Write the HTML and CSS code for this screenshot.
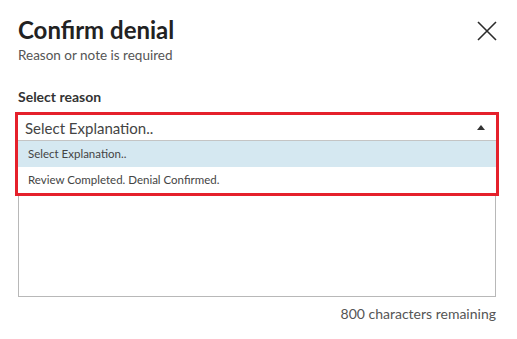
FILE: index.html
```html
<!DOCTYPE html>
<html lang="en">
  <head>
    <meta charset="UTF-8" />
    <title>Confirm denial</title>
    <link rel="stylesheet" href="styles.css">
  </head>
  <body>
    <div class="dialog">
      <div class="header">
        <div>
          <h1>Confirm denial</h1>
          <p class="subtitle">Reason or note is required</p>
        </div>
        <button class="close" type="button" aria-label="Close">
          <svg width="20" height="20" viewBox="0 0 20 20">
            <path d="M1 1 L19 19 M19 1 L1 19" stroke="#2b2b2b" stroke-width="1.6" fill="none" />
          </svg>
        </button>
      </div>

      <label class="label">Select reason</label>

      <div class="field">
        <div class="dropdown">
          <div class="select">
            <span>Select Explanation..</span>
            <span class="arrow"></span>
          </div>
          <ul class="menu">
            <li class="option active">Select Explanation..</li>
            <li class="option">Review Completed. Denial Confirmed.</li>
          </ul>
        </div>
      </div>

      <textarea class="note"></textarea>
      <div class="counter">800 characters remaining</div>
    </div>
  </body>
</html>
```

FILE: styles.css
```css
body {
  margin: 0;
  font-family: Lato, 'Noto Sans', sans-serif;
  background: white;
  color: #333;
}

.dialog {
  padding: 16px 21px 0 18px;
}

.header {
  display: flex;
  justify-content: space-between;
  align-items: flex-start;
}

h1 {
  margin: 0;
  font-size: 24px;
  font-weight: 700;
  line-height: 28px;
  color: #222;
}

.subtitle {
  margin: 0;
  font-size: 13.5px;
  line-height: 22px;
  color: #555;
}

.close {
  background: none;
  border: none;
  padding: 0;
  margin: 5px -1px 0 0;
  cursor: pointer;
}

.label {
  display: block;
  margin-top: 22px;
  font-size: 14px;
  font-weight: 700;
  line-height: 18px;
  color: #333;
}

.field {
  position: relative;
  height: 27px;
  margin-top: 9px;
}

.dropdown {
  position: absolute;
  top: 0;
  left: 0;
  right: 0;
  z-index: 2;
  background: white;
  outline: 3px solid #e5202b;
}

.select {
  display: flex;
  justify-content: space-between;
  align-items: center;
  height: 25px;
  padding: 0 11px 0 7px;
  font-size: 15px;
  color: #444;
  border-bottom: 1px solid #c4c4c4;
}

.arrow {
  width: 0;
  height: 0;
  border-left: 4px solid transparent;
  border-right: 4px solid transparent;
  border-bottom: 5px solid #333;
}

.menu {
  list-style: none;
  margin: 0;
  padding: 0;
}

.option {
  height: 26px;
  line-height: 26px;
  padding-left: 10px;
  font-size: 11.5px;
  color: #444;
}

.option.active {
  background-color: #d5e8f1;
}

.note {
  display: block;
  box-sizing: border-box;
  width: 100%;
  height: 155px;
  margin-top: 0;
  border: 1px solid #b8b8b8;
  resize: none;
}

.counter {
  margin-top: 8px;
  text-align: right;
  font-size: 14px;
  color: #555;
}
```
